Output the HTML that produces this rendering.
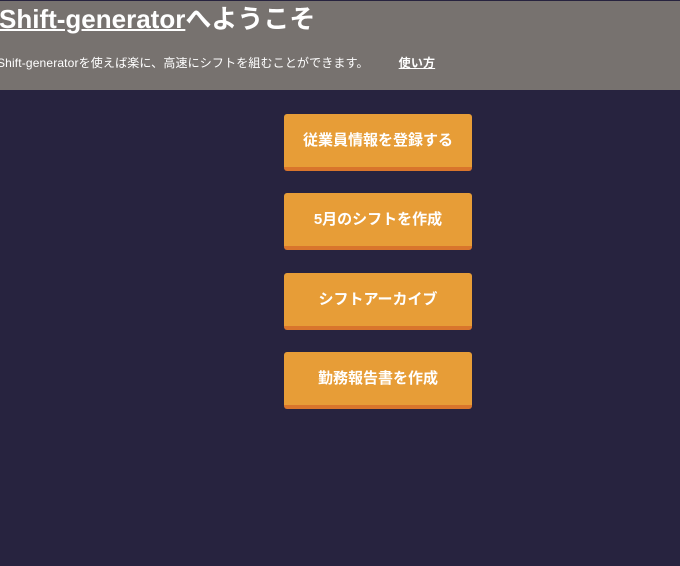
<!DOCTYPE html>
<html><head><meta charset="utf-8"><style>
body{margin:0;width:680px;height:566px;background:#27233f;font-family:"Liberation Sans","Noto Sans CJK JP",sans-serif;overflow:hidden;position:relative}
.hd{position:absolute;left:0;top:1px;width:680px;height:89px;background:#77726f;color:#fff}
h1{position:absolute;left:-1px;top:2px;margin:0;font-size:26px;font-weight:bold;line-height:32px;white-space:nowrap}
h1 u{text-decoration-thickness:2px}
.sub{position:absolute;left:-3px;top:53px;font-size:12px;letter-spacing:0.15px;line-height:18px;white-space:nowrap}
.sub u{margin-left:30px;font-weight:bold}
.b{position:absolute;left:284px;width:188px;height:53px;background:#e79d37;border-bottom:4px solid #d9752c;border-radius:3px;color:#fff;font-weight:bold;font-size:15px;line-height:53px;text-align:center}
</style></head><body>
<div class="hd"><h1><u>Shift-generator</u>へようこそ</h1>
<div class="sub">Shift-generatorを使えば楽に、高速にシフトを組むことができます。<u>使い方</u></div></div>
<div class="b" style="top:114px">従業員情報を登録する</div>
<div class="b" style="top:193px">5月のシフトを作成</div>
<div class="b" style="top:273px">シフトアーカイブ</div>
<div class="b" style="top:352px">勤務報告書を作成</div>
</body></html>
